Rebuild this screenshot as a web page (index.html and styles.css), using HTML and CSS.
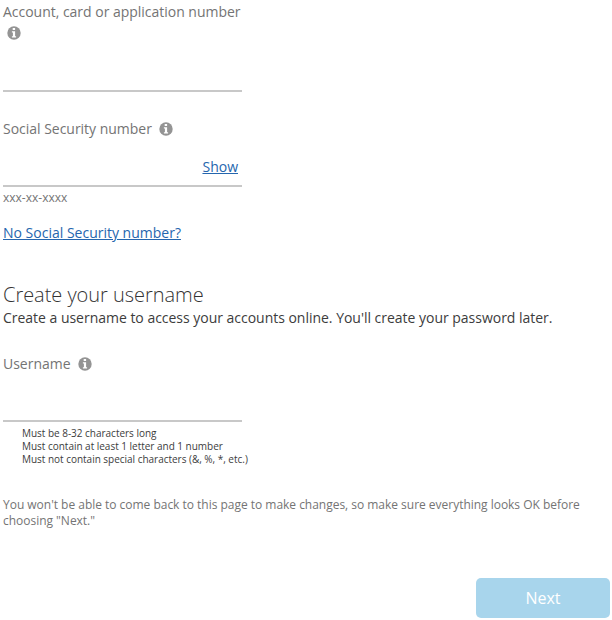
FILE: index.html
```html
<!DOCTYPE html>
<html lang="en">
<head>
<meta charset="utf-8">
<title>Create your username</title>
<link rel="stylesheet" href="styles.css">
</head>
<body>
<svg class="defs" width="0" height="0"><defs><symbol id="info" viewBox="0 0 14 14"><circle cx="7" cy="7" r="6.7" fill="#949494"/><path d="M5.7 2.1h2.4v2H5.7zM4.9 5.2h3.2v5h1v1.3H4.9v-1.3h1V6.5h-1z" fill="#fff"/></symbol></defs></svg>
<form class="form">
  <div class="field account">
    <label class="label">Account, card or application number</label>
    <svg class="info"><use href="#info"/></svg>
    <div class="input"></div>
  </div>
  <div class="field ssn">
    <div class="row"><label class="label">Social Security number</label><svg class="info"><use href="#info"/></svg></div>
    <div class="input"><a class="link show">Show</a></div>
    <div class="hint">xxx-xx-xxxx</div>
    <a class="link none">No Social Security number?</a>
  </div>
  <h2 class="heading">Create your username</h2>
  <p class="intro">Create a username to access your accounts online. You'll create your password later.</p>
  <div class="field user">
    <div class="row"><label class="label">Username</label><svg class="info"><use href="#info"/></svg></div>
    <div class="input"></div>
    <ul class="rules"><li>Must be 8-32 characters long</li><li>Must contain at least 1 letter and 1 number</li><li>Must not contain special characters (&amp;, %, *, etc.)</li></ul>
  </div>
  <p class="note">You won't be able to come back to this page to make changes, so make sure everything looks OK before choosing "Next."</p>
  <button class="next" type="button">Next</button>
</form>
</body>
</html>
```
FILE: styles.css
```css
* { box-sizing: border-box; margin: 0; padding: 0; }
body { width: 612px; height: 620px; overflow: hidden; background: #fff; font: 14px/20px "Open Sans", sans-serif; color: #3c3c3c; }
.defs { display: block; }
.form { display: flex; flex-direction: column; padding: 2px 2px 2px 3px; }
.field { display: flex; flex-direction: column; width: 239px; }
.label { color: #747474; white-space: nowrap; letter-spacing: -0.02px; }
.row { display: flex; align-items: center; gap: 7.5px; height: 20px; }
.row .info { margin-top: -1px; }
.info { width: 14px; height: 14px; flex: none; }
.account > .info { margin: 4px 0 1px 3.5px; }
.input { display: flex; justify-content: flex-end; border-bottom: 2px solid #c8c8c8; }
.account .input { height: 51px; }
.ssn { margin-top: 27px; }
.ssn .input { height: 48px; padding: 18px 4px 0 0; }
.link { color: #2566ae; text-decoration: underline; white-space: nowrap; }
.hint { font-size: 12px; line-height: 16px; margin-top: 3px; color: #747474; }
.none { margin-top: 17px; }
.heading { font-size: 20px; line-height: 28px; font-weight: 300; margin-top: 38px; color: #333; letter-spacing: -0.03px; }
.intro { line-height: 20px; margin-top: -1px; white-space: nowrap; letter-spacing: -0.02px; }
.user { margin-top: 26px; }
.user .row { gap: 7px; }
.user .input { height: 48px; }
.rules { list-style: none; margin: 5px 0 0 19px; font-size: 10px; line-height: 13px; white-space: nowrap; letter-spacing: -0.02px; }
.note { margin-top: 31px; font-size: 12px; line-height: 16px; color: #747474; letter-spacing: -0.02px; }
.next { align-self: flex-end; width: 134px; height: 40px; margin-top: 49px; border: 0; border-radius: 5px; background: #a8d5ec; color: #fff; font: 16px/24px "Open Sans", sans-serif; }
```
